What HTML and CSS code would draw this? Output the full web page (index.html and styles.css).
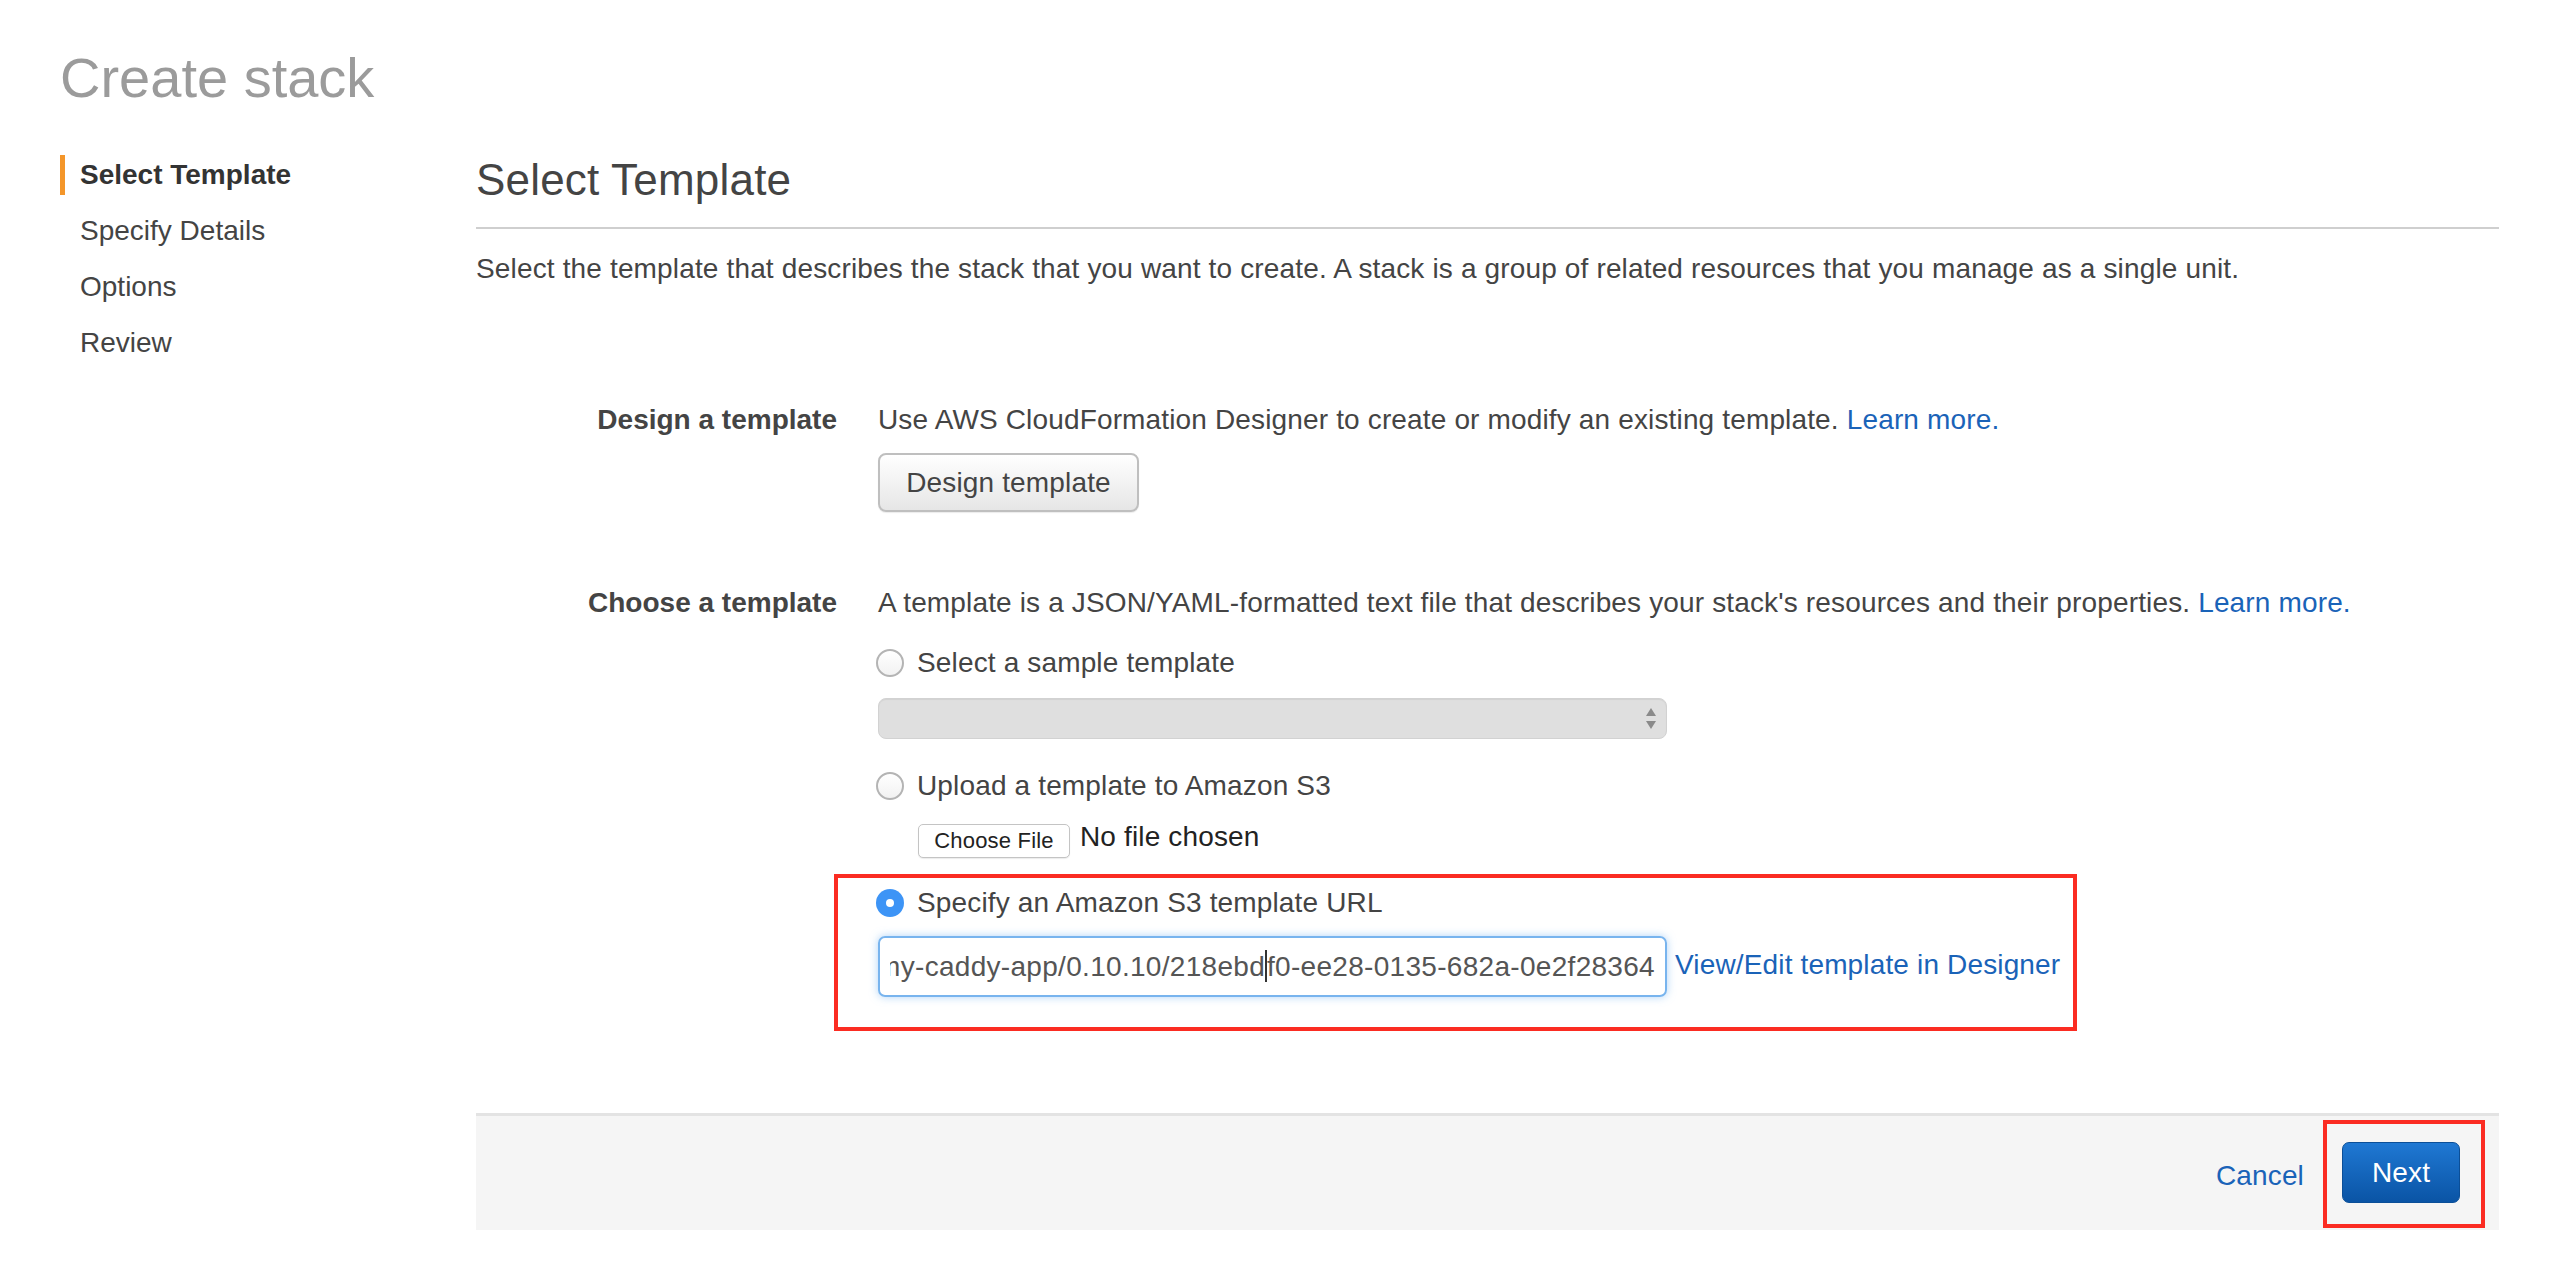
FILE: index.html
```html
<!DOCTYPE html>
<html lang="en">
<head>
<meta charset="utf-8">
<title>Create stack</title>
<link rel="stylesheet" href="styles.css">
</head>
<body>
<div class="page">
  <h1 class="page-title">Create stack</h1>
  <div class="layout">
    <nav class="steps">
      <div class="step active">Select Template</div>
      <div class="step">Specify Details</div>
      <div class="step">Options</div>
      <div class="step">Review</div>
    </nav>
    <main class="main">
      <h2 class="section-title">Select Template</h2>
      <p class="intro">Select the template that describes the stack that you want to create. A stack is a group of related resources that you manage as a single unit.</p>

      <div class="form-row design-row">
        <div class="label">Design a template</div>
        <div class="content">
          <div class="line">Use AWS CloudFormation Designer to create or modify an existing template. <a class="link" href="#">Learn more.</a></div>
          <button class="btn-default">Design template</button>
        </div>
      </div>

      <div class="form-row choose-row">
        <div class="label">Choose a template</div>
        <div class="content">
          <div class="line">A template is a JSON/YAML-formatted text file that describes your stack's resources and their properties. <a class="link" href="#">Learn more.</a></div>

          <div class="option opt-sample">
            <span class="radio"></span><span>Select a sample template</span>
          </div>
          <div class="select">
            <svg class="select-arrows" width="14" height="30" viewBox="0 0 14 30"><path d="M7 4 L12 12 L2 12 Z" fill="#8a8a8a"/><path d="M2 17 L12 17 L7 25 Z" fill="#8a8a8a"/></svg>
          </div>

          <div class="option opt-upload">
            <span class="radio"></span><span>Upload a template to Amazon S3</span>
          </div>
          <div class="file-row">
            <span class="file-btn">Choose File</span><span class="file-name">No file chosen</span>
          </div>

          <div class="highlight">
            <div class="option opt-url">
              <span class="radio checked"></span><span>Specify an Amazon S3 template URL</span>
            </div>
            <div class="url-row">
              <div class="url-input"><div class="url-clip"><span class="url-text">templates/my-caddy-app/0.10.10/218ebd<span class="caret"></span>f0-ee28-0135-682a-0e2f28364</span></div></div>
              <a class="link designer-link" href="#">View/Edit template in Designer</a>
            </div>
          </div>
        </div>
      </div>

      <div class="footer">
        <a class="link cancel" href="#">Cancel</a>
        <span class="next-mark"><button class="btn-primary">Next</button></span>
      </div>
    </main>
  </div>
</div>
</body>
</html>
```

FILE: styles.css
```css
html, body {
  margin: 0;
  padding: 0;
  background: #ffffff;
}
body {
  font-family: "Liberation Sans", Helvetica, Arial, sans-serif;
  font-size: 28px;
  color: #444444;
  letter-spacing: 0.15px;
}
.page {
  padding-left: 60px;
  width: 2439px;
}
.page-title {
  margin: 0;
  padding-top: 46px;
  font-size: 56px;
  line-height: 64px;
  font-weight: normal;
  color: #9b9b9b;
  letter-spacing: 0;
}
.layout {
  display: flex;
}
.steps {
  width: 416px;
  flex: none;
  padding-top: 45px;
  display: flex;
  flex-direction: column;
  gap: 16px;
}
.step {
  height: 40px;
  line-height: 40px;
  padding-left: 15px;
  border-left: 5px solid transparent;
  box-sizing: border-box;
  color: #444;
  letter-spacing: 0;
}
.step.active {
  border-left-color: #f4962a;
  font-weight: bold;
  color: #333;
}
.main {
  width: 2023px;
  flex: none;
}
.section-title {
  margin: 44px 0 0 0;
  font-size: 44px;
  line-height: 52px;
  font-weight: normal;
  color: #444;
  letter-spacing: 0.2px;
  padding-bottom: 21px;
  border-bottom: 2px solid #cfcfcf;
}
.intro {
  margin: 20px 0 0 0;
  line-height: 40px;
}
.form-row {
  display: grid;
  grid-template-columns: 361px 1621px;
  column-gap: 41px;
}
.design-row {
  margin-top: 111px;
}
.choose-row {
  margin-top: 71px;
}
.label {
  text-align: right;
  font-weight: bold;
  color: #444;
  line-height: 40px;
  letter-spacing: 0;
}
.line {
  line-height: 40px;
}
.link {
  color: #1a63b8;
  text-decoration: none;
}
.btn-default {
  margin-top: 13px;
  display: block;
  width: 261px;
  height: 59px;
  box-sizing: border-box;
  font-family: inherit;
  font-size: 28px;
  letter-spacing: 0.15px;
  color: #444;
  border: 2px solid #bfbfbf;
  border-radius: 8px;
  background: linear-gradient(#ffffff, #e6e6e6);
  box-shadow: 0 1px 1px rgba(0,0,0,0.08);
  padding: 0;
}
.option {
  display: flex;
  align-items: center;
  height: 40px;
  line-height: 40px;
  gap: 13px;
  margin-left: -2px;
}
.opt-sample {
  margin-top: 20px;
}
.opt-upload {
  margin-top: 27px;
}
.radio {
  width: 28px;
  height: 28px;
  box-sizing: border-box;
  border-radius: 50%;
  border: 2px solid #b4b4b4;
  background: linear-gradient(#ffffff, #f2f2f2);
  flex: none;
  position: relative;
}
.radio.checked {
  border: none;
  background: #3d94f6;
}
.radio.checked::after {
  content: "";
  position: absolute;
  left: 10px;
  top: 10px;
  width: 8px;
  height: 8px;
  border-radius: 50%;
  background: #ffffff;
}
.select {
  margin-top: 15px;
  width: 789px;
  height: 41px;
  box-sizing: border-box;
  border-radius: 8px;
  background: #dfdfdf;
  border: 1px solid #d2d2d2;
  box-shadow: inset 0 1px 1px rgba(0,0,0,0.06);
  display: flex;
  align-items: center;
  justify-content: flex-end;
  padding-right: 8px;
}
.file-row {
  margin-top: 18px;
  padding-left: 40px;
  display: flex;
  align-items: center;
  height: 34px;
}
.file-btn {
  display: inline-flex;
  align-items: center;
  justify-content: center;
  width: 152px;
  height: 34px;
  box-sizing: border-box;
  border: 1px solid #c4c4c4;
  border-radius: 5px;
  background: #ffffff;
  font-size: 22px;
  letter-spacing: 0.2px;
  color: #222;
  box-shadow: 0 1px 1px rgba(0,0,0,0.08);
}
.file-name {
  margin-left: 10px;
  color: #222;
  line-height: 34px;
  position: relative;
  top: -4px;
}
.highlight {
  margin-top: 16px;
  margin-left: -44px;
  width: 1243px;
  box-sizing: border-box;
  border: 4px solid #fb2c22;
  padding: 5px 0 30px 40px;
}
.url-row {
  margin-top: 13px;
  display: flex;
  align-items: center;
  gap: 8px;
}
.url-input {
  width: 789px;
  height: 61px;
  box-sizing: border-box;
  border: 2px solid #78b4ee;
  border-radius: 7px;
  box-shadow: 0 0 8px rgba(110,175,240,0.55);
  padding: 0 10px 0 10px;
  display: flex;
  align-items: center;
  flex: none;
}
.url-clip {
  flex: 1;
  display: flex;
  justify-content: flex-end;
  overflow: hidden;
  white-space: nowrap;
}
.url-text {
  color: #555;
  flex: none;
  letter-spacing: 0.3px;
}
.caret {
  display: inline-block;
  width: 0;
  height: 32px;
  border-left: 2px solid #333;
  vertical-align: -6px;
}
.designer-link {
  line-height: 40px;
  margin-top: -4px;
}
.footer {
  margin-top: 82px;
  height: 117px;
  box-sizing: border-box;
  border-top: 3px solid #e3e3e3;
  background: #f5f5f5;
  display: flex;
  align-items: flex-start;
  justify-content: flex-end;
  padding-right: 14px;
  padding-top: 4px;
}
.cancel {
  margin-top: 36px;
  margin-right: 19px;
  line-height: 40px;
}
.next-mark {
  display: block;
  border: 4px solid #fb2c22;
  padding: 18px 21px 21px 15px;
}
.btn-primary {
  display: block;
  width: 118px;
  height: 61px;
  box-sizing: border-box;
  font-family: inherit;
  font-size: 28px;
  letter-spacing: 0.15px;
  color: #ffffff;
  border: 1px solid #0b4f98;
  border-radius: 7px;
  background: linear-gradient(#1f78d3, #0a54a5);
  padding: 0;
}
```
